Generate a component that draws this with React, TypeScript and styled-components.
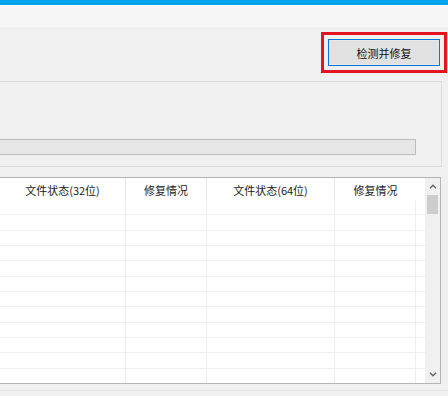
import styled, { createGlobalStyle } from 'styled-components';

const COLS = '126px 81px 128px 81px 9px';
const ROWS = 12;

const GlobalStyle = createGlobalStyle`
    html, body {
        margin: 0;
        padding: 0;
        background: #f0f0f0;
        overflow: hidden;
    }

    body {
        font-family: "Noto Sans CJK SC", "Liberation Sans", sans-serif;
        font-size: 11px;
        color: #1a1a1a;
    }
`;

const Window = styled.div`
    width: 448px;
    height: 396px;
    display: flex;
    flex-direction: column;
    background: #f0f0f0;
`;

const TitleStrip = styled.div`
    height: 5px;
    background: #00a3ee;
`;

const TopBand = styled.div`
    height: 22px;
    background: #f6f6f7;
    border-top: 1px solid #fbfbfb;
    box-sizing: border-box;
`;

const Toolbar = styled.div`
    height: 54px;
    display: flex;
    justify-content: flex-end;
    align-items: flex-start;
    padding: 12px 8px 0 0;
    box-sizing: border-box;
`;

const ActionButton = styled.button`
    width: 112px;
    height: 27px;
    margin: 0;
    padding: 1px 0 0;
    background: #e1e1e1;
    border: 1px solid #0078d7;
    box-shadow: inset 0 0 0 1px #e8e8e8;
    font: inherit;
    font-size: 11px;
    color: #111;
    outline: 3px solid #e3131f;
    outline-offset: 4px;
`;

const GroupBox = styled.div`
    height: 86px;
    margin-right: 6px;
    border: 1px solid #dcdcdc;
    border-left: none;
    box-sizing: border-box;
    display: flex;
    flex-direction: column;
    justify-content: flex-end;
    padding: 0 25px 11px 0;
`;

const Progress = styled.div`
    height: 16px;
    background: #e6e6e6;
    border: 1px solid #bcbcbc;
    border-left: none;
    box-sizing: border-box;
`;

const Table = styled.div`
    margin-top: 10px;
    width: 441px;
    height: 207px;
    box-sizing: border-box;
    border: 1px solid #b4b4b4;
    border-left: none;
    background: #fff;
    display: flex;
`;

const Grid = styled.div`
    flex: 1;
    display: flex;
    flex-direction: column;
`;

const HeaderRow = styled.div`
    display: grid;
    grid-template-columns: ${COLS};
    height: 22px;
`;

const HeaderCell = styled.div<{ $last?: boolean }>`
    display: flex;
    align-items: center;
    justify-content: center;
    border-right: ${(p) => (p.$last ? 'none' : '1px solid #e5e5e5')};
    white-space: nowrap;
    padding-top: 2px;
`;

const BodyRow = styled.div`
    display: grid;
    grid-template-columns: ${COLS};
    flex: 1;
    border-bottom: 1px solid #efefef;

    &:last-child {
        border-bottom: none;
    }
`;

const BodyCell = styled.div<{ $last?: boolean }>`
    border-right: ${(p) => (p.$last ? 'none' : '1px solid #eeeeee')};
`;

const ScrollBar = styled.div`
    width: 15px;
    background: #f0f0f0;
    display: flex;
    flex-direction: column;
    align-items: center;
`;

const Arrow = styled.div`
    height: 17px;
    width: 15px;
    display: flex;
    align-items: center;
    justify-content: center;
    color: #606060;
`;

const Thumb = styled.div`
    width: 11px;
    height: 19px;
    background: #cdcdcd;
`;

const Track = styled.div`
    flex: 1;
`;

const Footer = styled.div`
    flex: 1;
    border-bottom: 1px solid #e6e6e6;
    margin-bottom: 5px;
`;

const Chevron = ({ up }: { up?: boolean }) => (
    <svg width="8" height="5" viewBox="0 0 8 5">
        <path
            d={up ? 'M1 4.2 L4 1.2 L7 4.2' : 'M1 0.8 L4 3.8 L7 0.8'}
            fill="none"
            stroke="currentColor"
            strokeWidth="1.3"
        />
    </svg>
);

const headers = ['文件状态(32位)', '修复情况', '文件状态(64位)', '修复情况', ''];

export default function App() {
    return (
        <Window>
            <GlobalStyle />
            <TitleStrip />
            <TopBand />
            <Toolbar>
                <ActionButton>检测并修复</ActionButton>
            </Toolbar>
            <GroupBox>
                <Progress />
            </GroupBox>
            <Table>
                <Grid>
                    <HeaderRow>
                        {headers.map((h, i) => (
                            <HeaderCell key={i} $last={i >= 3}>
                                {h}
                            </HeaderCell>
                        ))}
                    </HeaderRow>
                    {Array.from({ length: ROWS }).map((_, r) => (
                        <BodyRow key={r}>
                            {headers.map((_, i) => (
                                <BodyCell key={i} $last={i >= 4} />
                            ))}
                        </BodyRow>
                    ))}
                </Grid>
                <ScrollBar>
                    <Arrow>
                        <Chevron up />
                    </Arrow>
                    <Thumb />
                    <Track />
                    <Arrow>
                        <Chevron />
                    </Arrow>
                </ScrollBar>
            </Table>
            <Footer />
        </Window>
    );
}
